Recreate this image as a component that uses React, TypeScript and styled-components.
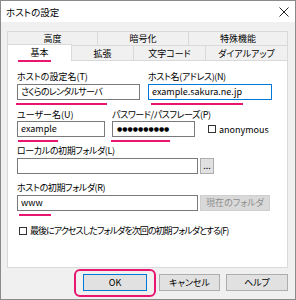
import React from 'react';
import styled, { createGlobalStyle } from 'styled-components';

const GlobalStyle = createGlobalStyle`
  html, body {
    margin: 0;
    padding: 0;
    background: #ffffff;
  }
  body {
    font-family: "Noto Sans CJK JP", "Noto Sans", sans-serif;
    font-feature-settings: "palt";
  }
`;

const PINK = '#e8166f';

const Window = styled.div`
  width: 296px;
  height: 300px;
  box-sizing: border-box;
  border: 1px solid #8a8a8a;
  background: #f0f0f0;
  display: flex;
  flex-direction: column;
`;

const TitleBar = styled.div`
  height: 21px;
  background: #ffffff;
  display: flex;
  align-items: center;
  justify-content: space-between;
  padding: 0 6px 0 5px;
`;

const Title = styled.span`
  font-size: 9.5px;
  color: #000;
`;

const Body = styled.div`
  padding: 9px 7px 0 6px;
`;

const TabRow = styled.div<{ $h: number }>`
  display: flex;
  height: ${({ $h }) => $h}px;
`;

const Tab = styled.div<{ $w: number; $first?: boolean }>`
  position: relative;
  width: ${({ $w }) => $w}px;
  box-sizing: border-box;
  margin-left: ${({ $first }) => ($first ? 0 : -1)}px;
  border: 1px solid #d9d9d9;
  border-bottom: none;
  display: flex;
  align-items: center;
  justify-content: center;
  font-size: 9px;
  color: #000;
`;

const ActiveTab = styled(Tab)`
  background: #ffffff;
  margin-top: -1px;
  height: 17px;
  z-index: 1;
  padding-bottom: 1px;

  &::after {
    content: '';
    position: absolute;
    left: 10px;
    top: 15px;
    width: 33px;
    height: 2px;
    background: ${PINK};
  }
`;

const Panel = styled.div`
  height: 208px;
  box-sizing: border-box;
  background: #ffffff;
  border: 1px solid #d9d9d9;
  padding: 10px 15px 0 9px;
`;

const Row = styled.div<{ $gap: number; $mt: number }>`
  display: flex;
  gap: ${({ $gap }) => $gap}px;
  margin-top: ${({ $mt }) => $mt}px;
`;

const Field = styled.div<{ $w: number }>`
  width: ${({ $w }) => $w}px;
  display: flex;
  flex-direction: column;
`;

const Label = styled.div<{ $tight?: boolean }>`
  height: 12px;
  line-height: 12px;
  font-size: 9px;
  color: #000;
  white-space: nowrap;
  letter-spacing: ${({ $tight }) => ($tight ? '-0.4px' : '0')};
`;

const Input = styled.div<{ $focus?: boolean; $mt?: number; $w?: number; $tight?: boolean }>`
  height: 16px;
  box-sizing: border-box;
  ${({ $w }) => ($w ? `width: ${$w}px;` : '')}
  margin-top: ${({ $mt }) => $mt ?? 0}px;
  border: 1px solid ${({ $focus }) => ($focus ? '#0078d7' : '#7a7a7a')};
  background: #fff;
  padding: 0 3px;
  font-size: 9px;
  line-height: 14px;
  letter-spacing: ${({ $tight }) => ($tight ? '-0.7px' : '0')};
  color: #000;
  white-space: nowrap;
  overflow: hidden;
`;

const Dots = styled.span`
  font-size: 6px;
  letter-spacing: 0;
  font-family: "DejaVu Sans", sans-serif;
  vertical-align: top;
  line-height: 14px;
  padding-left: 1px;
`;

const Marker = styled.div<{ $w: number; $x: number; $mt?: number }>`
  width: ${({ $w }) => $w}px;
  height: 2px;
  margin-left: ${({ $x }) => $x}px;
  margin-top: ${({ $mt }) => $mt ?? 3}px;
  background: ${PINK};
`;

const CheckWrap = styled.label<{ $ml?: number; $tight?: boolean }>`
  display: flex;
  align-items: center;
  gap: 3px;
  margin-left: ${({ $ml }) => $ml ?? 0}px;
  font-size: 9px;
  letter-spacing: ${({ $tight }) => ($tight ? '-0.95px' : '0')};
  color: #000;
  white-space: nowrap;
`;

const CheckBox = styled.span`
  width: 8px;
  height: 8px;
  box-sizing: border-box;
  border: 1px solid #333;
  background: #fff;
  flex: none;
`;

const AnonRow = styled.div`
  align-self: flex-start;
  margin-top: 12px;
  height: 16px;
  display: flex;
  align-items: center;
`;

const SideButton = styled.div<{ $w: number; $disabled?: boolean }>`
  width: ${({ $w }) => $w}px;
  height: 16px;
  box-sizing: border-box;
  margin-top: 1px;
  border: 1px solid ${({ $disabled }) => ($disabled ? '#cfcfcf' : '#adadad')};
  background: ${({ $disabled }) => ($disabled ? '#d9d9d9' : '#e1e1e1')};
  color: ${({ $disabled }) => ($disabled ? '#8d8d8d' : '#000')};
  font-size: 9px;
  line-height: 13px;
  text-align: center;
`;

const ButtonRow = styled.div`
  display: flex;
  margin-top: 6px;
  padding-left: 76px;
`;

const Button = styled.div<{ $w: number; $ml?: number; $default?: boolean }>`
  position: relative;
  width: ${({ $w }) => $w}px;
  height: 17px;
  box-sizing: border-box;
  margin-left: ${({ $ml }) => $ml ?? 0}px;
  border: 1px solid ${({ $default }) => ($default ? '#0078d7' : '#adadad')};
  background: #e1e1e1;
  font-size: 9px;
  line-height: 15px;
  text-align: center;
  color: #000;

  ${({ $default }) =>
    $default
      ? `&::after {
    content: '';
    position: absolute;
    left: -10px;
    right: -10px;
    top: -6px;
    bottom: -7px;
    border: 2px solid ${PINK};
    border-radius: 6px;
  }`
      : ''}
`;

const CloseIcon = () => (
  <svg width="10" height="10" viewBox="0 0 10 10">
    <path d="M0.5 0.5 L9.5 9.5 M9.5 0.5 L0.5 9.5" stroke="#222" strokeWidth="1" fill="none" />
  </svg>
);

const App: React.FC = () => {
  return (
    <>
      <GlobalStyle />
      <Window>
        <TitleBar>
          <Title>ホストの設定</Title>
          <CloseIcon />
        </TitleBar>
        <Body>
          <TabRow $h={14}>
            <Tab $w={91} $first>高度</Tab>
            <Tab $w={92}>暗号化</Tab>
            <Tab $w={100}>特殊機能</Tab>
          </TabRow>
          <TabRow $h={15}>
            <ActiveTab $w={65} $first>基本</ActiveTab>
            <Tab $w={63}>拡張</Tab>
            <Tab $w={73}>文字コード</Tab>
            <Tab $w={83}>ダイアルアップ</Tab>
          </TabRow>
          <Panel>
            <Row $gap={8} $mt={0}>
              <Field $w={123}>
                <Label>ホストの設定名(T)</Label>
                <Input $mt={1} $tight>さくらのレンタルサーバ</Input>
                <Marker $w={91} $x={-1} />
              </Field>
              <Field $w={124}>
                <Label $tight>ホスト名(アドレス)(N)</Label>
                <Input $mt={1} $focus>example.sakura.ne.jp</Input>
                <Marker $w={92} $x={3} />
              </Field>
            </Row>
            <Row $gap={7} $mt={4}>
              <Field $w={88}>
                <Label>ユーザー名(U)</Label>
                <Input>example</Input>
                <Marker $w={40} $x={1} />
              </Field>
              <Field $w={83}>
                <Label $tight>パスワード/パスフレーズ(P)</Label>
                <Input>
                  <Dots>●●●●●●●●●●</Dots>
                </Input>
                <Marker $w={59} $x={-1} />
              </Field>
              <AnonRow>
                <CheckWrap $ml={6}>
                  <CheckBox />
                  anonymous
                </CheckWrap>
              </AnonRow>
            </Row>
            <Row $gap={0} $mt={3}>
              <Field $w={256}>
                <Label $tight>ローカルの初期フォルダ(L)</Label>
                <Row $gap={2} $mt={0}>
                  <Input $mt={1} $w={181} />
                  <SideButton $w={14}>...</SideButton>
                </Row>
              </Field>
            </Row>
            <Row $gap={0} $mt={8}>
              <Field $w={256}>
                <Label $tight>ホストの初期フォルダ(R)</Label>
                <Row $gap={2} $mt={0}>
                  <Input $mt={1} $w={181}>www</Input>
                  <SideButton $w={70} $disabled>現在のフォルダ</SideButton>
                </Row>
                <Marker $w={32} $x={2} />
              </Field>
            </Row>
            <Row $gap={0} $mt={8}>
              <CheckWrap $ml={2} $tight>
                <CheckBox />
                最後にアクセスしたフォルダを次回の初期フォルダとする(F)
              </CheckWrap>
            </Row>
          </Panel>
          <ButtonRow>
            <Button $w={64} $default>OK</Button>
            <Button $w={61} $ml={12}>キャンセル</Button>
            <Button $w={62} $ml={6}>ヘルプ</Button>
          </ButtonRow>
        </Body>
      </Window>
    </>
  );
};

export default App;
